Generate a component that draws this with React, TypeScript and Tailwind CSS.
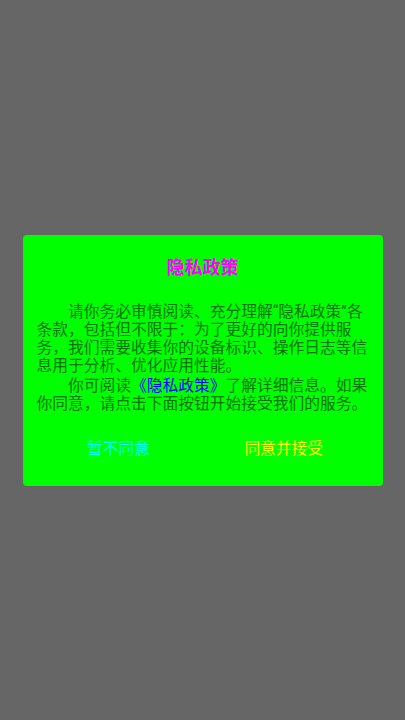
import React from "react";

export default function App() {
  const font = { fontFamily: 'Roboto, "Noto Sans CJK SC", sans-serif' };
  return (
    <div
      className="w-[405px] h-[720px] bg-[#666666] flex items-center justify-center"
      style={font}
    >
      <div className="w-[360px] h-[251px] bg-[#00ff00] rounded-[4px] flex flex-col">
        <div className="pt-[21.5px] h-[45.5px] text-center text-[18px] leading-[24px] font-bold text-[#ff00ff]">
          隐私政策
        </div>
        <div className="pl-[14px] mt-[23.4px] w-[350px] text-[15.75px] leading-[17.7px] text-[#007400]">
          <p className="indent-[31.5px]">
            请你务必审慎阅读、充分理解“隐私政策”各条款，包括但不限于：为了更好的向你提供服务，我们需要收集你的设备标识、操作日志等信息用于分析、优化应用性能。
          </p>
          <p className="indent-[31.5px] mt-[3px]">
            你可阅读<span className="text-[#0000ff]">《隐私政策》</span>了解详细信息。如果你同意，请点击下面按钮开始接受我们的服务。
          </p>
        </div>
        <div className="flex pl-[13px] pr-[16px] mt-[12px] h-[48px] text-[15.75px]">
          <div className="flex-1 flex items-center justify-center text-[#00ffff]">暂不同意</div>
          <div className="flex-1 flex items-center justify-center text-[#ffff00]">同意并接受</div>
        </div>
      </div>
    </div>
  );
}
